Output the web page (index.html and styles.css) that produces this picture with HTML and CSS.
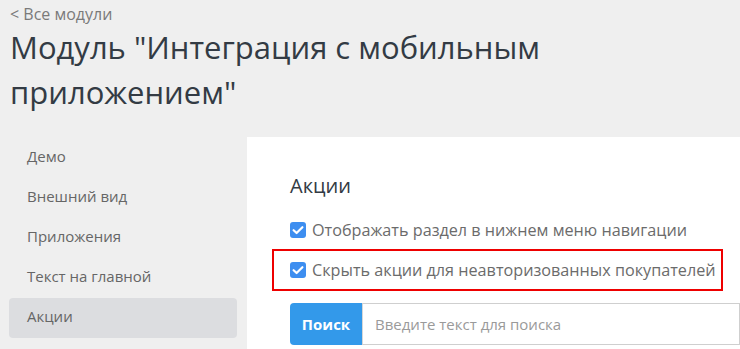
FILE: index.html
```html
<!DOCTYPE html>
<html lang="ru">
<head>
<meta charset="utf-8">
<title>Модуль</title>
<link rel="stylesheet" href="styles.css">
</head>
<body>
<header class="header">
  <a class="back" href="#">&lt; Все модули</a>
  <h1 class="title">Модуль "Интеграция с мобильным приложением"</h1>
</header>
<div class="layout">
  <nav class="sidebar">
    <a class="nav-item" href="#">Демо</a>
    <a class="nav-item" href="#">Внешний вид</a>
    <a class="nav-item" href="#">Приложения</a>
    <a class="nav-item" href="#">Текст на главной</a>
    <a class="nav-item active" href="#">Акции</a>
  </nav>
  <main class="panel">
    <h2 class="panel-title">Акции</h2>
    <label class="check-row">
      <span class="box"><svg viewBox="0 0 16 16" width="16" height="16"><path d="M3.6 8.2 L6.6 11 L12.4 5.2" fill="none" stroke="#fff" stroke-width="2.2" stroke-linecap="round" stroke-linejoin="round"/></svg></span>
      <span class="check-text">Отображать раздел в нижнем меню навигации</span>
    </label>
    <label class="check-row highlight">
      <span class="box"><svg viewBox="0 0 16 16" width="16" height="16"><path d="M3.6 8.2 L6.6 11 L12.4 5.2" fill="none" stroke="#fff" stroke-width="2.2" stroke-linecap="round" stroke-linejoin="round"/></svg></span>
      <span class="check-text">Скрыть акции для неавторизованных покупателей</span>
    </label>
    <div class="search">
      <button class="search-btn" type="button">Поиск</button>
      <input class="search-input" type="text" placeholder="Введите текст для поиска">
    </div>
  </main>
</div>
</body>
</html>
```
FILE: styles.css
```css
* { box-sizing: border-box; }
html, body { margin: 0; padding: 0; }
body {
  background: #efefef;
  font-family: "Open Sans", "Noto Sans", sans-serif;
  overflow: hidden;
  height: 349px;
}
.header {
  padding: 3px 10px 0 10px;
  height: 137px;
}
.back {
  display: block;
  color: #7a7a7a;
  font-size: 16px;
  line-height: 22px;
  text-decoration: none;
}
.title {
  margin: 0;
  font-weight: 400;
  font-size: 31px;
  line-height: 45px;
  color: #333b44;
}
.layout {
  display: flex;
  height: 212px;
}
.sidebar {
  width: 247px;
  flex: none;
  padding: 1px 10px 0 9px;
  display: flex;
  flex-direction: column;
}
.nav-item {
  display: flex;
  align-items: center;
  height: 40px;
  padding: 0 18px 5px 18px;
  font-size: 15px;
  color: #666;
  text-decoration: none;
  border-radius: 4px;
}
.nav-item.active {
  background: #dcdde0;
}
.panel {
  flex: 1;
  background: #fff;
  padding: 34px 0 0 43px;
  overflow: hidden;
}
.panel-title {
  margin: 0 0 8px 0;
  font-weight: 400;
  font-size: 20px;
  line-height: 30px;
  color: #333b44;
}
.check-row {
  display: flex;
  align-items: center;
  gap: 6px;
  height: 40px;
  padding-top: 2px;
  font-size: 16.2px;
  color: #6b6b6b;
  white-space: nowrap;
}
.box {
  width: 16px;
  height: 16px;
  border-radius: 3px;
  background: #3d8ef0;
  display: flex;
  flex: none;
}
.highlight {
  width: 451px;
  height: 42px;
  margin-left: -18px;
  padding: 0 0 0 16px;
  border: 2px solid #ee0000;
}
.search {
  display: flex;
  margin-top: 12px;
  height: 42px;
}
.search-btn {
  width: 72px;
  flex: none;
  border: none;
  background: #3399ea;
  color: #fff;
  font-family: inherit;
  font-weight: 700;
  font-size: 15px;
  border-radius: 4px 0 0 4px;
  padding: 0;
}
.search-input {
  flex: 1;
  min-width: 0;
  border: 1px solid #cfcfcf;
  border-left: 1px solid #d6d6d6;
  padding: 0 12px;
  font-family: inherit;
  font-size: 15px;
  color: #333;
  outline: none;
}
.search-input::placeholder { color: #9a9a9a; }
```
